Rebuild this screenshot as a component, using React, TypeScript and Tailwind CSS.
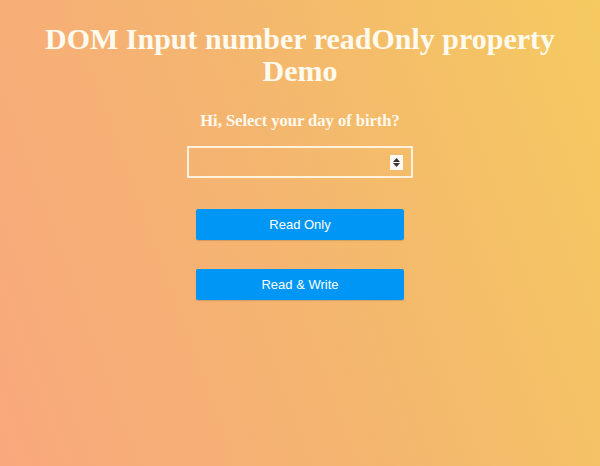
import React from "react";

export default function App() {
  return (
    <div className="w-[600px] h-[466px] overflow-hidden bg-[linear-gradient(70deg,#f9a87d_0%,#f4b66f_50%,#f5ca60_100%)] flex flex-col items-center" style={{ fontFamily: '"Liberation Serif", serif' }}>
      <h1 className="mt-[23px] text-[30px] leading-[32px] font-bold text-[#fffaee] text-center w-[540px]">
        DOM Input number readOnly property Demo
      </h1>
      <h2 className="mt-[24px] text-[16.5px] leading-[20px] font-bold text-[#fffaee]">Hi, Select your day of birth?</h2>
      <div className="mt-[15px] w-[226px] h-[32px] border-2 border-[#fdf3dc] flex items-center justify-end pr-[8px]">
        <div className="w-[13px] h-[15px] bg-[#fdfaf5] flex flex-col items-center justify-center gap-[1px]">
          <svg width="7" height="4" viewBox="0 0 7 4"><path d="M0 4 L3.5 0 L7 4 Z" fill="#333" /></svg>
          <svg width="7" height="4" viewBox="0 0 7 4"><path d="M0 0 L3.5 4 L7 0 Z" fill="#333" /></svg>
        </div>
      </div>
      <button className="mt-[31px] w-[208px] h-[31px] bg-[#0096f6] text-white text-[13px] rounded-[2px] shadow-[0_1px_1px_rgba(0,0,0,0.15)]" style={{ fontFamily: '"Liberation Sans", Arial, sans-serif' }}>
        Read Only
      </button>
      <button className="mt-[29px] w-[208px] h-[31px] bg-[#0096f6] text-white text-[13px] rounded-[2px] shadow-[0_1px_1px_rgba(0,0,0,0.15)]" style={{ fontFamily: '"Liberation Sans", Arial, sans-serif' }}>
        Read &amp; Write
      </button>
    </div>
  );
}
